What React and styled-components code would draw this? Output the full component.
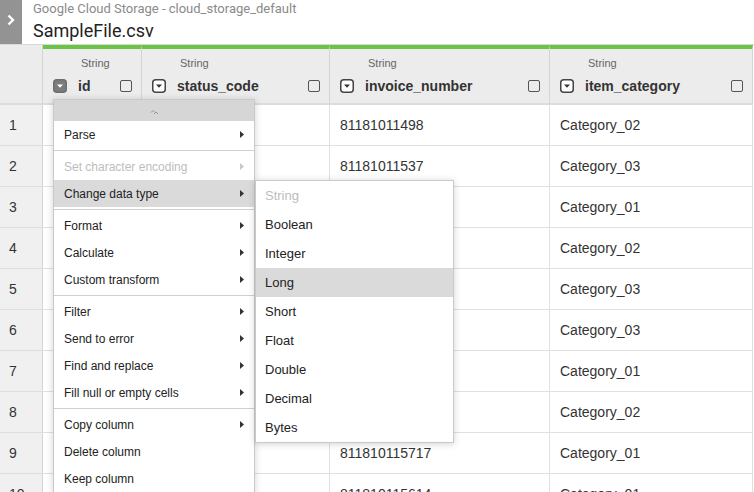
import React from "react";
import styled, { createGlobalStyle } from "styled-components";

const GlobalStyle = createGlobalStyle`
  html, body {
    margin: 0;
    padding: 0;
    background: #ffffff;
    overflow: hidden;
  }
  body {
    font-family: "Liberation Sans", Arial, sans-serif;
    color: #333;
  }
`;

const Page = styled.div`
  position: relative;
  width: 754px;
  height: 492px;
  overflow: hidden;
`;

const TopBar = styled.div`
  display: flex;
  height: 44px;
  background: #fff;
`;

const SideToggle = styled.div`
  width: 22px;
  height: 44px;
  background: #939393;
  display: flex;
  justify-content: center;
  padding-top: 14px;
  box-sizing: border-box;
`;

const TitleBlock = styled.div`
  display: flex;
  flex-direction: column;
  padding: 1px 0 0 11px;
  gap: 4px;
`;

const Source = styled.div`
  font-family: Roboto, "Liberation Sans", sans-serif;
  font-size: 13px;
  line-height: 15px;
  color: #8a8a8a;
`;

const FileName = styled.div`
  font-family: Roboto, "Liberation Sans", sans-serif;
  font-size: 18px;
  line-height: 21px;
  color: #222;
`;

const GridWrap = styled.div`
  border-top: 1px solid #d8d8d8;
`;

const Grid = styled.div`
  display: grid;
  grid-template-columns: 43px 99px 188px 220px 203px;
`;

const CornerCell = styled.div`
  box-sizing: border-box;
  height: 60px;
  background: #ececec;
  border-right: 1px solid #d4d4d4;
  border-bottom: 2px solid #dcdcdc;
`;

const HeaderCell = styled.div`
  box-sizing: border-box;
  height: 60px;
  background: #ececec;
  border-top: 4px solid #6cc444;
  border-right: 1px solid #d4d4d4;
  border-bottom: 2px solid #dcdcdc;
  padding: 8px 9px 10px 10px;
  display: flex;
  flex-direction: column;
  gap: 9px;
`;

const TypeLabel = styled.div`
  font-size: 11px;
  line-height: 13px;
  color: #666;
  padding-left: 28px;
`;

const NameRow = styled.div`
  display: flex;
  align-items: center;
  height: 14px;
  gap: 11px;
`;

const ColName = styled.div`
  flex: 1;
  font-size: 14px;
  font-weight: bold;
  color: #333;
  white-space: nowrap;
`;

const CheckBox = styled.div`
  width: 12px;
  height: 12px;
  box-sizing: border-box;
  border: 1px solid #555;
  border-radius: 2px;
`;

const NumCell = styled.div`
  box-sizing: border-box;
  height: 41px;
  background: #f0f0f0;
  border-right: 1px solid #d4d4d4;
  border-bottom: 1px solid #dedede;
  padding-left: 9px;
  display: flex;
  align-items: center;
  font-size: 14px;
  color: #333;
`;

const DataCell = styled.div`
  box-sizing: border-box;
  height: 41px;
  background: #fff;
  border-right: 1px solid #e0e0e0;
  border-bottom: 1px solid #e0e0e0;
  padding-left: 10px;
  display: flex;
  align-items: center;
  font-size: 14px;
  color: #333;
  white-space: nowrap;
`;

const Menu = styled.div`
  position: absolute;
  top: 99px;
  left: 53px;
  width: 202px;
  box-sizing: border-box;
  background: #fff;
  border: 1px solid #c9c9c9;
  box-shadow: 0 1px 7px rgba(0, 0, 0, 0.18);
  z-index: 2;
`;

const Handle = styled.div`
  height: 21px;
  background: #d6d6d6;
  display: flex;
  justify-content: center;
  align-items: center;
  padding-top: 2px;
  box-sizing: border-box;
`;

const MenuItem = styled.div`
  position: relative;
  height: 27px;
  padding: 0 10px 0 10px;
  display: flex;
  align-items: center;
  justify-content: space-between;
  font-size: 12px;
  color: ${(p) => (p.$disabled ? "#bdbdbd" : "#222")};
  background: ${(p) => (p.$active ? "#dadada" : "transparent")};
`;

const Separator = styled.div`
  height: 1px;
  background: #cfcfcf;
  margin: 2px 0 2px;
`;

const SubMenu = styled.div`
  position: absolute;
  top: 0;
  left: calc(100% + 1px);
  width: 199px;
  box-sizing: border-box;
  background: #fff;
  border: 1px solid #c9c9c9;
  box-shadow: 0 1px 7px rgba(0, 0, 0, 0.18);
`;

const SubItem = styled.div`
  height: 29px;
  padding-left: 9px;
  display: flex;
  align-items: center;
  font-size: 13px;
  color: ${(p) => (p.$disabled ? "#bdbdbd" : "#222")};
  background: ${(p) => (p.$active ? "#dadada" : "transparent")};
`;

const Chevron = () => (
  <svg width="8" height="12" viewBox="0 0 8 12">
    <polyline points="1.5,1.5 6,6 1.5,10.5" fill="none" stroke="#fff" strokeWidth="2.4" />
  </svg>
);

const DropIcon = ({ active }) => (
  <svg width="14" height="14" viewBox="0 0 14 14">
    <rect
      x="0.75"
      y="0.75"
      width="12.5"
      height="12.5"
      rx="3"
      fill={active ? "#7c7c7c" : "#fff"}
      stroke={active ? "#6e6e6e" : "#444"}
      strokeWidth="1.5"
    />
    <polygon points="4,5.5 10,5.5 7,8.8" fill={active ? "#fff" : "#333"} />
  </svg>
);

const Arrow = ({ disabled }) => (
  <svg width="4" height="7" viewBox="0 0 4 7">
    <polygon points="0,0 4,3.5 0,7" fill={disabled ? "#c8c8c8" : "#333"} />
  </svg>
);

const UpIcon = () => (
  <svg width="9" height="6" viewBox="0 0 9 6">
    <polyline points="1,3.5 3,1.5 5,3.5" fill="none" stroke="#999" strokeWidth="1" />
    <polyline points="4,5 6,3 8,5" fill="none" stroke="#999" strokeWidth="1" />
  </svg>
);

const columns = [
  { name: "id", active: true },
  { name: "status_code" },
  { name: "invoice_number" },
  { name: "item_category" },
];

const rows = [
  ["1041", "200", "81181011498", "Category_02"],
  ["1042", "200", "81181011537", "Category_03"],
  ["1043", "404", "81181011562", "Category_01"],
  ["1044", "200", "81181011589", "Category_02"],
  ["1045", "200", "81181011603", "Category_03"],
  ["1046", "500", "81181011631", "Category_03"],
  ["1047", "200", "81181011655", "Category_01"],
  ["1048", "200", "81181011689", "Category_02"],
  ["1049", "200", "811810115717", "Category_01"],
  ["1050", "200", "811810115614", "Category_01"],
];

const menuGroups = [
  [{ label: "Parse", sub: true }],
  [
    { label: "Set character encoding", sub: true, disabled: true },
    { label: "Change data type", sub: true, active: true },
  ],
  [
    { label: "Format", sub: true },
    { label: "Calculate", sub: true },
    { label: "Custom transform", sub: true },
  ],
  [
    { label: "Filter", sub: true },
    { label: "Send to error", sub: true },
    { label: "Find and replace", sub: true },
    { label: "Fill null or empty cells", sub: true },
  ],
  [
    { label: "Copy column", sub: true },
    { label: "Delete column" },
    { label: "Keep column" },
  ],
];

const dataTypes = ["String", "Boolean", "Integer", "Long", "Short", "Float", "Double", "Decimal", "Bytes"];

function App() {
  return (
    <Page>
      <GlobalStyle />
      <TopBar>
        <SideToggle>
          <Chevron />
        </SideToggle>
        <TitleBlock>
          <Source>Google Cloud Storage - cloud_storage_default</Source>
          <FileName>SampleFile.csv</FileName>
        </TitleBlock>
      </TopBar>

      <GridWrap>
        <Grid>
          <CornerCell />
          {columns.map((col) => (
            <HeaderCell key={col.name}>
              <TypeLabel>String</TypeLabel>
              <NameRow>
                <DropIcon active={col.active} />
                <ColName>{col.name}</ColName>
                <CheckBox />
              </NameRow>
            </HeaderCell>
          ))}
          {rows.map((row, i) => (
            <React.Fragment key={i}>
              <NumCell>{i + 1}</NumCell>
              {row.map((v, j) => (
                <DataCell key={j}>{v}</DataCell>
              ))}
            </React.Fragment>
          ))}
        </Grid>
      </GridWrap>

      <Menu>
        <Handle>
          <UpIcon />
        </Handle>
        {menuGroups.map((group, gi) => (
          <React.Fragment key={gi}>
            {gi > 0 && <Separator />}
            {group.map((item) => (
              <MenuItem key={item.label} $disabled={item.disabled} $active={item.active}>
                {item.label}
                {item.sub && <Arrow disabled={item.disabled} />}
                {item.active && (
                  <SubMenu>
                    {dataTypes.map((t) => (
                      <SubItem key={t} $disabled={t === "String"} $active={t === "Long"}>
                        {t}
                      </SubItem>
                    ))}
                  </SubMenu>
                )}
              </MenuItem>
            ))}
          </React.Fragment>
        ))}
      </Menu>
    </Page>
  );
}

export default App;
